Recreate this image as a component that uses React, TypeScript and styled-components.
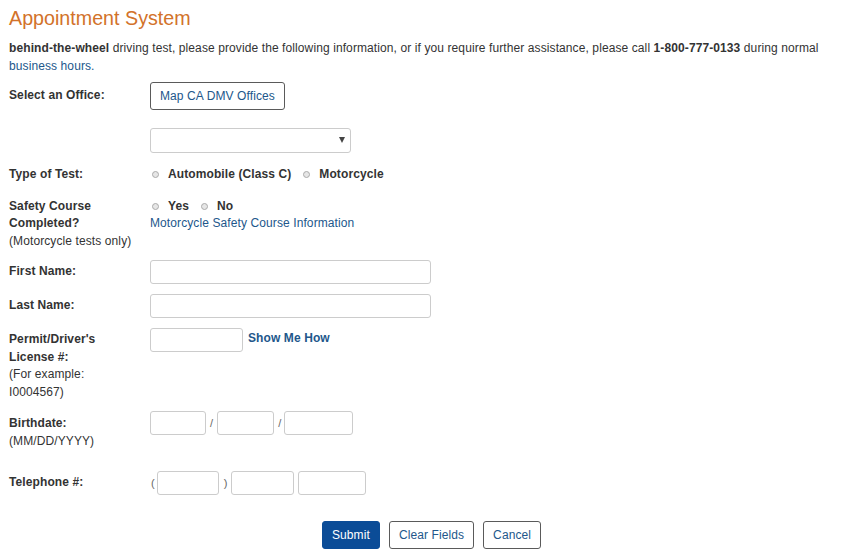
import React from 'react';
import styled, { createGlobalStyle } from 'styled-components';

const GlobalStyle = createGlobalStyle`
  body {
    margin: 0;
    background: #fff;
    font-family: "Liberation Sans", Arial, sans-serif;
    font-size: 12px;
    letter-spacing: 0.1px;
    color: #333;
  }
`;

const Page = styled.div`
  padding: 6px 9px 0 9px;
  width: 865px;
  box-sizing: border-box;
`;

const Title = styled.h1`
  margin: 0;
  font-size: 19.7px;
  font-weight: normal;
  letter-spacing: 0;
  line-height: 24px;
  color: #d2722a;
`;

const Intro = styled.p`
  margin: 9px 0 0 0;
  max-width: 840px;
  line-height: 18px;
`;

const Link = styled.a<{ $bold?: boolean }>`
  color: #22578b;
  text-decoration: none;
  font-weight: ${({ $bold }) => ($bold ? 'bold' : 'normal')};
`;

const Row = styled.div<{ $top: number; $center?: boolean }>`
  display: grid;
  grid-template-columns: 141px 1fr;
  margin-top: ${({ $top }) => $top}px;
  align-items: ${({ $center }) => ($center ? 'center' : 'start')};
`;

const Label = styled.div<{ $pad?: number }>`
  font-weight: bold;
  line-height: 17.5px;
  padding-top: ${({ $pad }) => $pad ?? 0}px;
`;

const Hint = styled.span`
  display: block;
  font-weight: normal;
`;

const Controls = styled.div`
  display: flex;
  align-items: center;
`;

const Stack = styled.div`
  display: flex;
  flex-direction: column;
  line-height: 17.5px;
`;

const OutlineButton = styled.button`
  font-family: inherit;
  font-size: 12px;
  letter-spacing: 0.1px;
  color: #22578b;
  background: #fff;
  border: 1px solid #5a5a5a;
  border-radius: 3px;
  height: 28px;
  padding: 0 9px;
  cursor: pointer;
`;

const SubmitButton = styled(OutlineButton)`
  background: #0b4c97;
  border-color: #0b4c97;
  color: #fff;
`;

const SelectWrap = styled.div`
  position: relative;
  width: 201px;
  height: 25px;
`;

const Select = styled.select`
  appearance: none;
  width: 100%;
  height: 100%;
  border: 1px solid #ccc;
  border-radius: 3px;
  background: #fff;
  font-family: inherit;
  font-size: 12px;
`;

const Arrow = styled.span`
  position: absolute;
  right: 6px;
  top: 9px;
  width: 0;
  height: 0;
  border-left: 3.5px solid transparent;
  border-right: 3.5px solid transparent;
  border-top: 6px solid #444;
  pointer-events: none;
`;

const Radio = styled.span<{ $gap?: number }>`
  display: inline-block;
  width: 5px;
  height: 5px;
  border-radius: 50%;
  border: 1px solid #aaa;
  background: #e6e6e6;
  margin-left: ${({ $gap }) => $gap ?? 0}px;
  margin-right: 9px;
`;

const RadioText = styled.span`
  font-weight: bold;
  line-height: 17px;
`;

const Input = styled.input<{ $w: number }>`
  box-sizing: border-box;
  width: ${({ $w }) => $w}px;
  height: 24px;
  border: 1px solid #ccc;
  border-radius: 3px;
  background: #fff;
  padding: 0 4px;
  font-family: inherit;
  font-size: 12px;
`;

const Sep = styled.span<{ $l: number; $r: number }>`
  color: #666;
  font-size: 11px;
  margin: 0 ${({ $r }) => $r}px 0 ${({ $l }) => $l}px;
`;

const Actions = styled.div`
  display: flex;
  justify-content: center;
  gap: 9px;
  margin-top: 26px;
  padding-right: 2px;
`;

export default function App() {
  return (
    <>
      <GlobalStyle />
      <Page>
        <Title>Appointment System</Title>
        <Intro>
          <b>behind-the-wheel</b> driving test, please provide the following information, or if you
          require further assistance, please call <b>1-800-777-0133</b> during normal{' '}
          <Link href="#">business hours.</Link>
        </Intro>

        <Row $top={7} $center>
          <Label>Select an Office:</Label>
          <Controls>
            <OutlineButton type="button">Map CA DMV Offices</OutlineButton>
          </Controls>
        </Row>

        <Row $top={18}>
          <div />
          <SelectWrap>
            <Select defaultValue="">
              <option value=""></option>
            </Select>
            <Arrow />
          </SelectWrap>
        </Row>

        <Row $top={13} $center>
          <Label>Type of Test:</Label>
          <Controls>
            <Radio $gap={2} />
            <RadioText>Automobile (Class C)</RadioText>
            <Radio $gap={12} />
            <RadioText>Motorcycle</RadioText>
          </Controls>
        </Row>

        <Row $top={14}>
          <Label>
            Safety Course
            <br />
            Completed?
            <Hint>(Motorcycle tests only)</Hint>
          </Label>
          <Stack>
            <Controls>
              <Radio $gap={2} />
              <RadioText>Yes</RadioText>
              <Radio $gap={12} />
              <RadioText>No</RadioText>
            </Controls>
            <Link href="#">Motorcycle Safety Course Information</Link>
          </Stack>
        </Row>

        <Row $top={10} $center>
          <Label>First Name:</Label>
          <Controls>
            <Input $w={281} />
          </Controls>
        </Row>

        <Row $top={10} $center>
          <Label>Last Name:</Label>
          <Controls>
            <Input $w={281} />
          </Controls>
        </Row>

        <Row $top={10}>
          <Label $pad={3}>
            Permit/Driver's
            <br />
            License #:
            <Hint>(For example:</Hint>
            <Hint>I0004567)</Hint>
          </Label>
          <Controls>
            <Input $w={93} />
            <Link href="#" $bold style={{ marginLeft: 5, marginTop: -4 }}>
              Show Me How
            </Link>
          </Controls>
        </Row>

        <Row $top={10}>
          <Label $pad={4}>
            Birthdate:
            <Hint>(MM/DD/YYYY)</Hint>
          </Label>
          <Controls>
            <Input $w={56} />
            <Sep $l={4} $r={4}>/</Sep>
            <Input $w={57} />
            <Sep $l={4} $r={3}>/</Sep>
            <Input $w={69} />
          </Controls>
        </Row>

        <Row $top={21} $center>
          <Label>Telephone #:</Label>
          <Controls>
            <Sep $l={1} $r={2}>(</Sep>
            <Input $w={62} />
            <Sep $l={5} $r={3}>)</Sep>
            <Input $w={63} />
            <Sep $l={4} $r={0}>{''}</Sep>
            <Input $w={68} />
          </Controls>
        </Row>

        <Actions>
          <SubmitButton type="button">Submit</SubmitButton>
          <OutlineButton type="button">Clear Fields</OutlineButton>
          <OutlineButton type="button">Cancel</OutlineButton>
        </Actions>
      </Page>
    </>
  );
}
